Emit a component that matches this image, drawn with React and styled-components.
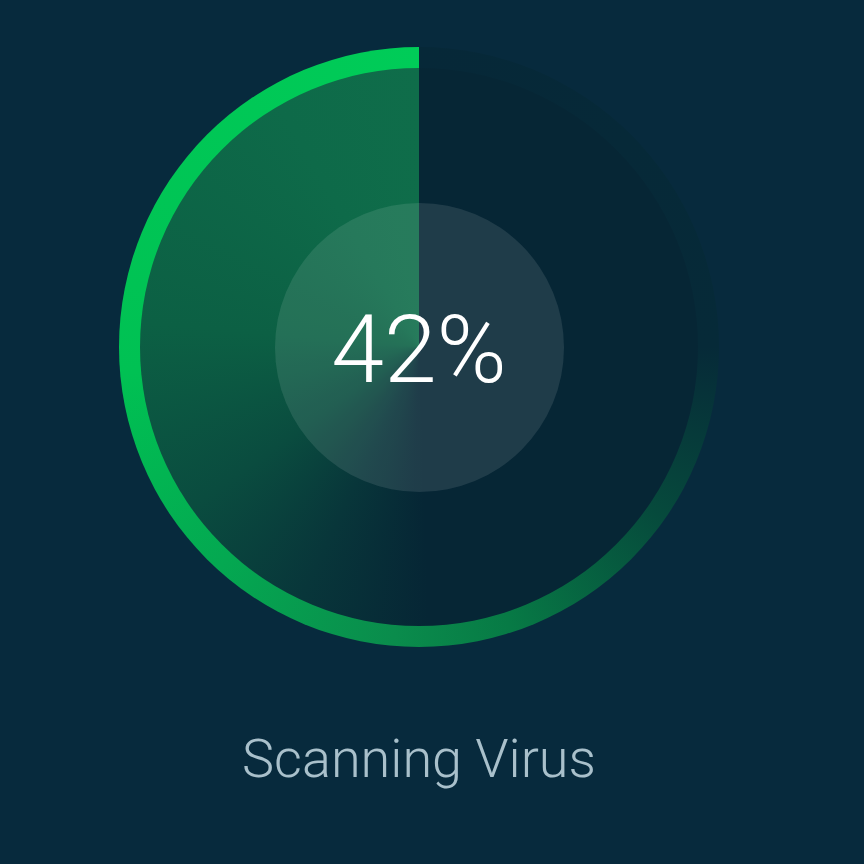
import React from "react";
import styled, { createGlobalStyle } from "styled-components";

const GlobalStyle = createGlobalStyle`
  html, body {
    margin: 0;
    padding: 0;
    background: #072a3d;
  }
  body {
    font-family: Roboto, "Liberation Sans", sans-serif;
  }
`;

export default function App() {
  const progress = 42;

  return (
    <>
      <GlobalStyle />
      <Page>
        <Column>
          <Ring>
            <Disk>
              <Core>
                <Percent>{progress}%</Percent>
              </Core>
            </Disk>
          </Ring>
          <Caption>Scanning Virus</Caption>
        </Column>
      </Page>
    </>
  );
}

const Page = styled.div`
  width: 864px;
  height: 864px;
  background: #072a3d;
  overflow: hidden;
`;

const Column = styled.div`
  width: 600px;
  margin-left: 119px;
  padding-top: 47px;
  display: flex;
  flex-direction: column;
  align-items: center;
`;

const Ring = styled.div`
  width: 600px;
  height: 600px;
  border-radius: 50%;
  display: flex;
  align-items: center;
  justify-content: center;
  background: conic-gradient(
    #062838 0deg,
    #062a38 90deg,
    #064a3c 125deg,
    #077a45 162deg,
    #0a8c4c 185deg,
    #04a851 222deg,
    #00c153 265deg,
    #00cc58 360deg
  );
`;

const Disk = styled.div`
  width: 558px;
  height: 558px;
  border-radius: 50%;
  display: flex;
  align-items: center;
  justify-content: center;
  background: conic-gradient(
    #062635 0deg,
    #062635 178deg,
    #08363a 205deg,
    #0a4c3f 235deg,
    #0c6044 275deg,
    #0e6a49 330deg,
    #0f6d4a 360deg
  );
`;

const Core = styled.div`
  width: 289px;
  height: 289px;
  border-radius: 50%;
  background: rgba(255, 255, 255, 0.1);
  display: flex;
  align-items: center;
  justify-content: center;
`;

const Percent = styled.div`
  color: #ffffff;
  font-size: 95px;
  font-weight: 300;
  line-height: 1;
  margin-top: 4px;
`;

const Caption = styled.div`
  margin-top: 85px;
  color: #a9c0cb;
  font-size: 54px;
  font-weight: 300;
  line-height: 1;
`;
